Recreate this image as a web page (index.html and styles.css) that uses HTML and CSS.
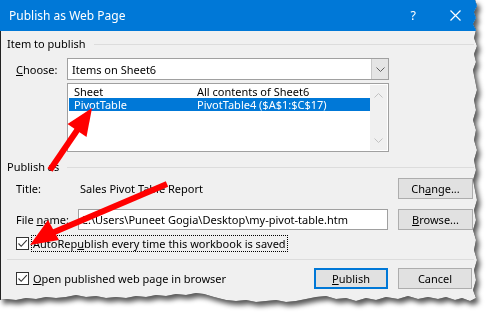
FILE: index.html
```html
<!DOCTYPE html>
<html>
<head>
<meta charset="utf-8">
<link rel="stylesheet" href="styles.css">
</head>
<body>
<div class="stage">
  <div class="frame">
    <div class="dialog">
      <div class="titlebar">
        <span class="title">Publish as Web Page</span>
        <span class="help">?</span>
        <svg class="close" width="11" height="11" viewBox="0 0 11 11"><path d="M0.5 0.5 L10.5 10.5 M10.5 0.5 L0.5 10.5" stroke="#fff" stroke-width="1.2" fill="none"/></svg>
      </div>
      <div class="content">
        <div class="group-head"><span>Item to publish</span><div class="rule"></div></div>
        <div class="choose-row">
          <span class="lbl"><u>C</u>hoose:</span>
          <div class="combo">
            <span class="combo-text">Items on Sheet6</span>
            <div class="drop"><svg width="9" height="5" viewBox="0 0 9 5"><path d="M0.5 0.5 L4.5 4.5 L8.5 0.5" stroke="#606060" fill="none" stroke-width="1"/></svg></div>
          </div>
        </div>
        <div class="listbox">
          <div class="items">
            <div class="item"><span class="c1">Sheet</span><span>All contents of Sheet6</span></div>
            <div class="item sel"><span class="c1">PivotTable</span><span>PivotTable4 ($A$1:$C$17)</span></div>
          </div>
          <div class="scroll">
            <svg width="9" height="5" viewBox="0 0 9 5"><path d="M0.5 4.5 L4.5 0.5 L8.5 4.5" stroke="#c2c2c2" fill="none" stroke-width="1"/></svg>
            <svg width="9" height="5" viewBox="0 0 9 5"><path d="M0.5 0.5 L4.5 4.5 L8.5 0.5" stroke="#c2c2c2" fill="none" stroke-width="1"/></svg>
          </div>
        </div>
        <div class="group-head pub-head"><span>Publish as</span><div class="rule"></div></div>
        <div class="pub-grid">
          <span class="lbl">Title:</span>
          <span class="value">Sales Pivot Table Report</span>
          <button class="btn">Ch<u>a</u>nge...</button>
          <span class="lbl">File <u>n</u>ame:</span>
          <div class="input">C:\Users\Puneet Gogia\Desktop\my-pivot-table.htm</div>
          <button class="btn"><u>B</u>rowse...</button>
        </div>
        <div class="check-row">
          <span class="checkbox"><svg width="11" height="11" viewBox="0 0 11 11"><path d="M1.5 5.5 L4.2 8.3 L9.8 2.2" stroke="#333" fill="none" stroke-width="1.1"/></svg></span>
          <span class="focus">AutoRep<u>u</u>blish every time this workbook is saved</span>
        </div>
        <div class="sep"></div>
        <div class="bottom-row">
          <span class="checkbox"><svg width="11" height="11" viewBox="0 0 11 11"><path d="M1.5 5.5 L4.2 8.3 L9.8 2.2" stroke="#333" fill="none" stroke-width="1.1"/></svg></span>
          <span class="open-text"><u>O</u>pen published web page in browser</span>
          <button class="btn primary"><u>P</u>ublish</button>
          <button class="btn cancel">Cancel</button>
        </div>
      </div>
    </div>
  </div>
  <svg class="arrows" width="495" height="319" viewBox="0 0 495 319">
    <line x1="50" y1="170" x2="80" y2="126" stroke="#f00" stroke-width="6"/>
    <polygon points="92,108 86.5,137 67.5,124" fill="#f00"/>
    <line x1="167" y1="184" x2="52" y2="233" stroke="#f00" stroke-width="6"/>
    <polygon points="30,245 59,240 48,220" fill="#f00"/>
  </svg>
</div>
</body>
</html>
```

FILE: styles.css
```css
* { box-sizing: border-box; }

body {
  margin: 0;
  background: #fff;
  font-family: "Noto Sans", sans-serif;
  font-size: 11px;
  color: #000;
}

.stage {
  position: relative;
  width: 495px;
  height: 319px;
}

.frame {
  width: 480px;
  height: 306px;
  filter: drop-shadow(0 0 0.5px #000) drop-shadow(3px 4px 2.5px rgba(0, 0, 0, 0.65));
}

.dialog {
  width: 480px;
  height: 306px;
  background: #f0f0f0;
  display: flex;
  flex-direction: column;
  clip-path: polygon(475px 0, 477px 6px, 474px 12px, 476px 18px, 473px 24px, 476px 30px, 474px 38px, 477px 46px, 474px 54px, 476px 62px, 473px 70px, 475px 80px, 477px 90px, 474px 100px, 476px 110px, 473px 120px, 476px 130px, 474px 140px, 477px 150px, 474px 160px, 476px 170px, 473px 180px, 475px 190px, 477px 200px, 474px 210px, 476px 220px, 473px 230px, 476px 240px, 474px 250px, 477px 260px, 474px 270px, 476px 280px, 473px 290px, 476px 298px, 470px 301px, 462px 298px, 455px 300px, 446px 297px, 438px 299px, 428px 297px, 418px 299px, 408px 296px, 398px 299px, 386px 297px, 376px 300px, 366px 298px, 356px 301px, 346px 298px, 336px 299px, 326px 296px, 316px 297px, 306px 299px, 296px 301px, 286px 302px, 276px 300px, 266px 301px, 256px 302px, 246px 300px, 236px 301px, 226px 300px, 214px 297px, 204px 294px, 196px 293px, 186px 295px, 176px 294px, 166px 296px, 156px 295px, 146px 297px, 136px 296px, 126px 298px, 116px 297px, 106px 298px, 96px 296px, 86px 297px, 76px 295px, 66px 297px, 56px 298px, 46px 297px, 36px 299px, 26px 298px, 16px 300px, 6px 299px, 0 300px, 0 0);
}

.titlebar {
  height: 31px;
  flex: none;
  background: #0078d7;
  color: #fff;
  font-size: 12px;
  display: flex;
  align-items: center;
  padding-left: 9px;
}

.title { flex: 1; }

.help {
  font-size: 12.5px;
  margin-right: 34px;
}

.close {
  margin-right: 19px;
}

.content {
  flex: 1;
  border-left: 1px solid #222;
  padding: 5px 0 0 6px;
}

.group-head {
  display: flex;
  align-items: center;
  gap: 8px;
  height: 16px;
  line-height: 16px;
  margin-right: 6px;
}

.group-head .rule {
  flex: 1;
  height: 1px;
  background: #dcdcdc;
}

.lbl { white-space: nowrap; }

.choose-row {
  display: flex;
  align-items: center;
  margin-top: 6px;
  padding-left: 9px;
}

.choose-row .lbl { width: 51px; }

.combo {
  width: 322px;
  height: 22px;
  border: 1px solid #a0a0a0;
  background: #fff;
  display: flex;
  align-items: center;
}

.combo-text {
  flex: 1;
  padding-left: 4px;
}

.drop {
  width: 17px;
  height: 100%;
  background: #e5e5e5;
  border-left: 1px solid #c8c8c8;
  display: flex;
  align-items: center;
  justify-content: center;
}

.listbox {
  margin: 3px 0 0 60px;
  width: 322px;
  height: 69px;
  border: 1px solid #a0a0a0;
  background: #fff;
  padding: 1px;
  display: flex;
}

.items { flex: 1; }

.item {
  display: flex;
  height: 13px;
  line-height: 13px;
  padding-left: 5px;
}

.item .c1 { width: 123px; }

.item.sel {
  background: #0078d7;
  color: #fff;
}

.scroll {
  width: 17px;
  background: #f0f0f0;
  display: flex;
  flex-direction: column;
  align-items: center;
  justify-content: space-between;
  padding: 8px 0 7px;
}

.pub-head { margin-top: 7px; }

.pub-grid {
  display: grid;
  grid-template-columns: 62px 310px 10px 75px;
  grid-auto-rows: 21px;
  row-gap: 10px;
  align-items: center;
  margin-top: 3px;
  padding-left: 9px;
}

.pub-grid .btn { grid-column: 4; }

.value { padding-left: 2px; }

.input {
  height: 21px;
  border: 1px solid #a0a0a0;
  background: #fff;
  line-height: 19px;
  padding-left: 2px;
  white-space: nowrap;
  overflow: hidden;
}

.btn {
  font: inherit;
  color: #000;
  height: 21px;
  width: 75px;
  padding: 0;
  background: #e1e1e1;
  border: 1px solid #adadad;
}

.btn.primary {
  border: 2px solid #0078d7;
  width: 74px;
}

.check-row {
  display: flex;
  align-items: center;
  margin-top: 5px;
  padding-left: 9px;
  height: 16px;
}

.checkbox {
  width: 13px;
  height: 13px;
  border: 1px solid #333;
  background: #fff;
  display: flex;
  align-items: center;
  justify-content: center;
  flex: none;
}

.focus {
  margin-left: 3px;
  padding: 0 1px;
  line-height: 15px;
  outline: 1px dotted #000;
}

.sep {
  height: 1px;
  background: #dcdcdc;
  margin: 8px 6px 0 0;
}

.bottom-row {
  display: flex;
  align-items: center;
  margin-top: 8px;
  padding-left: 9px;
}

.open-text {
  margin-left: 4px;
  flex: 1;
}

.bottom-row .cancel {
  margin-left: 10px;
  margin-right: 8px;
  width: 74px;
}

.arrows {
  position: absolute;
  left: 0;
  top: 0;
  pointer-events: none;
}
```
